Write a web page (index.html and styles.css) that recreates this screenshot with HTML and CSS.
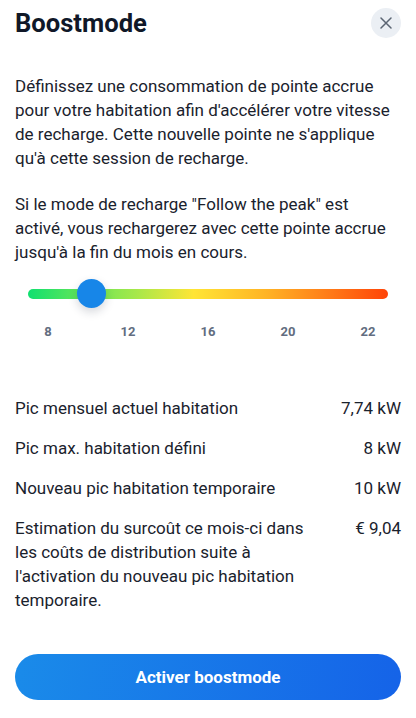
FILE: index.html
```html
<!DOCTYPE html>
<html lang="fr">
<head>
    <meta charset="UTF-8">
    <meta name="viewport" content="width=device-width, initial-scale=1.0">
    <title>Boostmode</title>
    <link rel="stylesheet" href="styles.css">
</head>
<body>
    <div class="sheet">
        <div class="header">
            <h1 class="title">Boostmode</h1>
            <button class="close-btn" aria-label="Fermer">
                <svg width="12" height="12" viewBox="0 0 12 12">
                    <path d="M1 1 L11 11 M11 1 L1 11" stroke="#5b6573" stroke-width="1.5" stroke-linecap="round" fill="none"/>
                </svg>
            </button>
        </div>

        <p class="text">Définissez une consommation de pointe accrue pour votre habitation afin d'accélérer votre vitesse de recharge. Cette nouvelle pointe ne s'applique qu'à cette session de recharge.</p>
        <p class="text text-second">Si le mode de recharge "Follow the peak" est activé, vous rechargerez avec cette pointe accrue jusqu'à la fin du mois en cours.</p>

        <!-- slider -->
        <div class="slider">
            <div class="track"></div>
            <div class="thumb"></div>
        </div>
        <div class="ticks">
            <span>8</span>
            <span>12</span>
            <span>16</span>
            <span>20</span>
            <span>22</span>
        </div>

        <div class="rows">
            <div class="row">
                <span class="label">Pic mensuel actuel habitation</span>
                <span class="value">7,74 kW</span>
            </div>
            <div class="row">
                <span class="label">Pic max. habitation défini</span>
                <span class="value">8 kW</span>
            </div>
            <div class="row">
                <span class="label">Nouveau pic habitation temporaire</span>
                <span class="value">10 kW</span>
            </div>
            <div class="row">
                <span class="label">Estimation du surcoût ce mois-ci dans les coûts de distribution suite à l'activation du nouveau pic habitation temporaire.</span>
                <span class="value">€ 9,04</span>
            </div>
        </div>

        <button class="main-btn">Activer boostmode</button>
    </div>
</body>
</html>
```

FILE: styles.css
```css
body {
    margin: 0;
    background: #ffffff;
    font-family: Roboto, "Noto Sans", sans-serif;
    color: #1a222d;
}
.sheet {
    padding: 8px 15px 0 15px;
}
.header {
    display: flex;
    justify-content: space-between;
    align-items: center;
    height: 30px;
}
.title {
    margin: 0;
    font-size: 25.6px;
    font-weight: 700;
    line-height: 30px;
    color: #101828;
}
.close-btn {
    width: 30px;
    height: 30px;
    border-radius: 50%;
    border: none;
    background-color: #ebeff4;
    display: flex;
    align-items: center;
    justify-content: center;
    padding: 0;
}
.text {
    margin: 36px 8px 0 0;
    font-size: 17px;
    line-height: 24px;
}
.text-second {
    margin-top: 22px;
}
/* slider */
.slider {
    position: relative;
    height: 30px;
    margin: 15px 13px 0 13px;
    display: flex;
    align-items: center;
}
.track {
    width: 100%;
    height: 10px;
    border-radius: 5px;
    background: linear-gradient(90deg, #10e070 0%, #5ee55a 14%, #a6e84a 30%, #ffe535 46%, #ffb425 66%, #ff7a18 84%, #ff4408 100%);
}
.thumb {
    position: absolute;
    left: 49px;
    top: 0;
    width: 29px;
    height: 29px;
    border-radius: 50%;
    background-color: #1786e8;
    box-shadow: 0 4px 10px rgba(30, 40, 60, 0.18);
}
.ticks {
    display: grid;
    grid-template-columns: repeat(5, 80px);
    margin: 15px -7px 0 -7px;
    font-size: 13px;
    font-weight: 700;
    line-height: 16px;
    color: #626d80;
    text-align: center;
}
.rows {
    margin-top: 56px;
    display: flex;
    flex-direction: column;
    gap: 16px;
}
.row {
    display: flex;
    justify-content: space-between;
    gap: 40px;
    font-size: 17px;
    line-height: 24px;
}
.value {
    white-space: nowrap;
    text-align: right;
}
.main-btn {
    display: block;
    width: 100%;
    height: 46px;
    margin-top: 42px;
    border: none;
    border-radius: 23px;
    background: linear-gradient(100deg, #1a8be9, #1563e8);
    color: #ffffff;
    font-family: Roboto, "Noto Sans", sans-serif;
    font-size: 17px;
    font-weight: 700;
}
```
